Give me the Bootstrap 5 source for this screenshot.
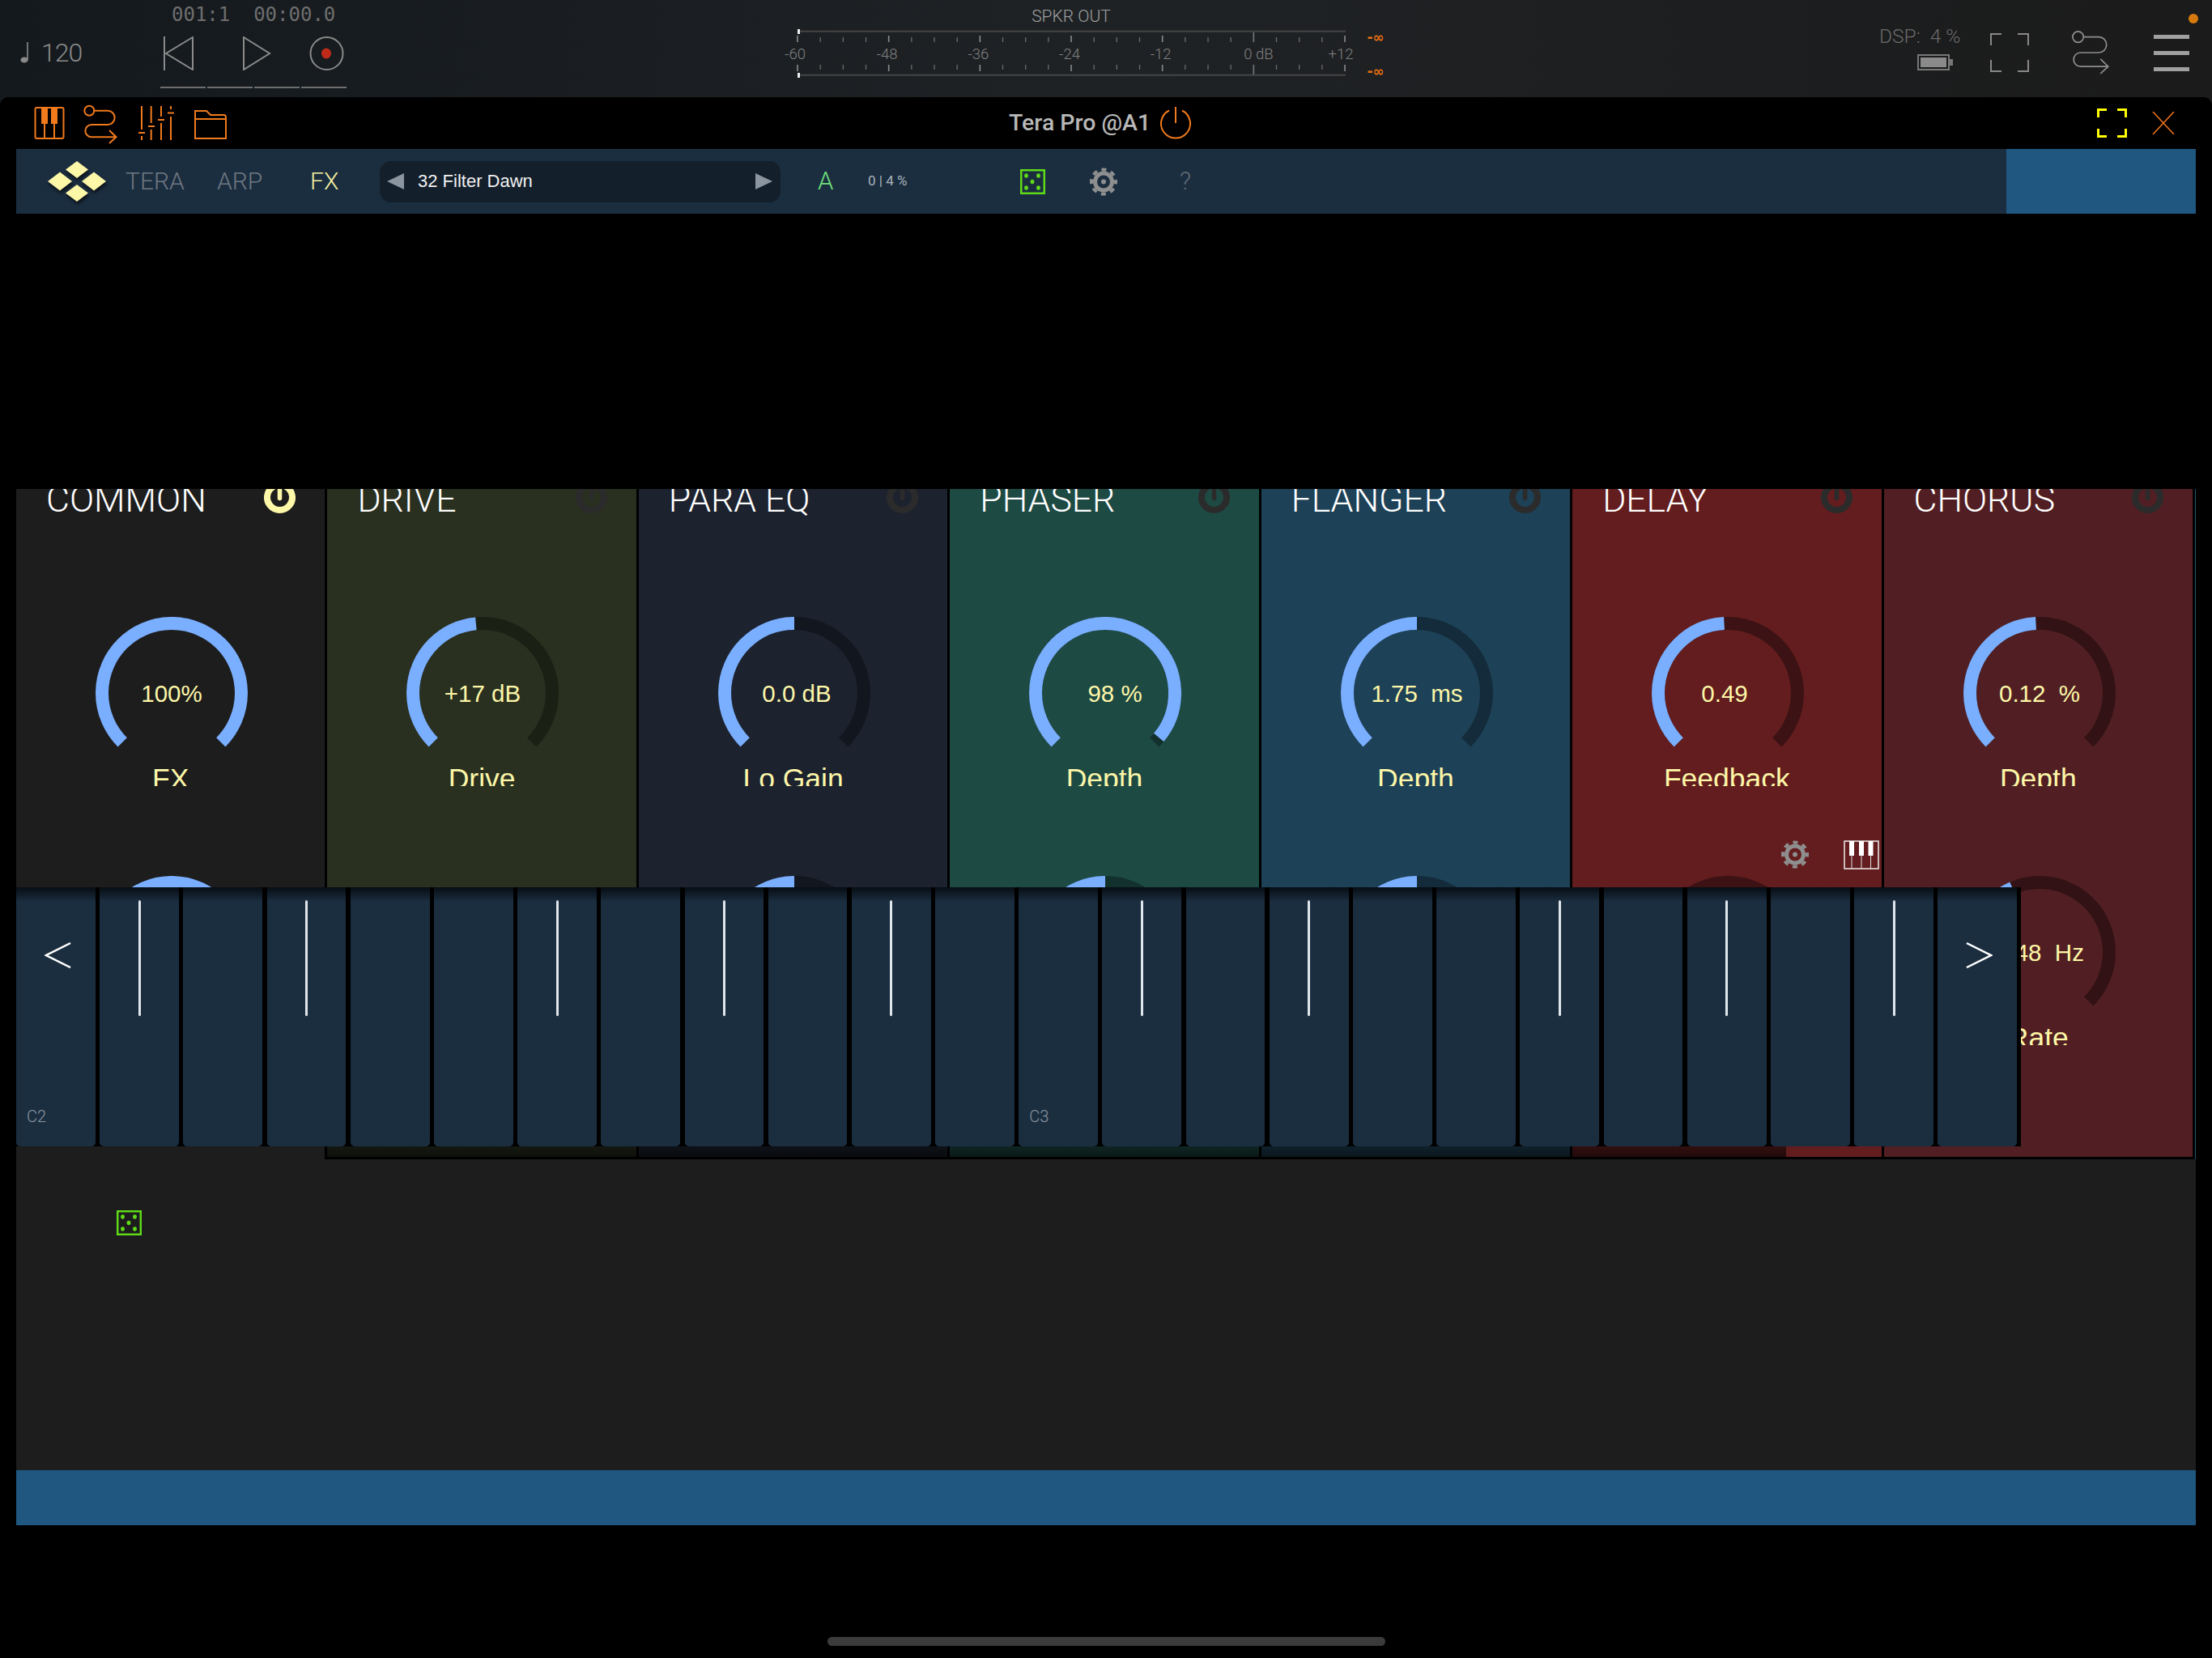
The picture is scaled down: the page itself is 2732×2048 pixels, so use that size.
<!DOCTYPE html>
<html lang="en">
<head>
    <meta charset="UTF-8">
    <title>Tera Pro @A1</title>
    <link href="https://cdn.jsdelivr.net/npm/bootstrap@5.3.0/dist/css/bootstrap.min.css" rel="stylesheet">
    <style>
        body { margin: 0; width: 2732px; height: 2048px; overflow: hidden; background: #000; font-family: Roboto, "Liberation Sans", sans-serif; font-weight: 300; }
        svg { display: block; flex: none; }
        .preText { white-space: pre; }

        /* host top bar */
        .hostBar { height: 128px; background: linear-gradient(90deg, #14191d, #1f2225 50%, #1b1b1b); position: relative; }
        .tempoBox { width: 198px; padding: 52px 0 0 25px; color: #8a8a8a; font-size: 32px; letter-spacing: -1px; line-height: 26px; gap: 14px; }
        .transportBox { width: 230px; }
        .timeText { font-family: "DejaVu Sans Mono", monospace; font-weight: 400; font-size: 24px; line-height: 28px; letter-spacing: 0; color: #6e6e6e; padding: 4px 0 0 14px; height: 45px; }
        .transportIcons { height: 42px; fill: none; stroke: #8a8a8a; stroke-width: 2; }
        .transportLine { gap: 2px; margin-top: 20px; }
        .transportLine span { flex: 1; height: 2px; background: #6e6e6e; }
        .meterBox { margin-left: 532px; width: 760px; }
        .meterBox text { font-family: Roboto, sans-serif; font-weight: 300; }
        .meterBox .meterInf { font-family: "DejaVu Sans", sans-serif; font-weight: 700; font-size: 17px; fill: #e86f10; }
        .dspBox { margin-left: 601px; width: 103px; padding-top: 31px; color: #6a6a6a; font-size: 24.5px; line-height: 28px; }
        .batteryIcon { margin: 8px 0 0 47px; }
        .screenIcon { margin: 41px 0 0 34px; fill: none; stroke: #888; stroke-width: 2; }
        .hostRoute { margin: 37px 0 0 50px; color: #8f8f8f; }
        .burgerBox { margin: 43px 0 0 51px; width: 44px; gap: 15.5px; }
        .burgerBox span { height: 4.5px; background: #a0a0a0; }
        .hostDot { position: absolute; left: 2703px; top: 17px; width: 12px; height: 12px; border-radius: 50%; background: #d67a0e; }

        /* plugin window */
        .pluginWin { margin-top: -8px; background: #000; border-radius: 10px 10px 0 0; position: relative; }
        .pluginTools { height: 64px; }
        .toolIcons { margin: 5px 0 0 30px; width: 260px; color: #f07a1c; fill: none; stroke: currentColor; stroke-width: 2; }
        .pluginTitle { margin: 0 0 0 956px; width: 174px; font-weight: 500; font-size: 28.5px; line-height: 64px; color: #b8b8b8; white-space: nowrap; }
        .pluginPower { margin: 12px 0 0 13px; fill: none; stroke: #f07a1c; stroke-width: 2; }
        .pluginExpand { margin: 14px 0 0 auto; fill: none; stroke: #ff0; stroke-width: 3; }
        .pluginClose { margin: 18px 46px 0 31px; fill: none; stroke: #e8701a; stroke-width: 1.6; }

        .headBar { margin: 0 20px; height: 80px; background: #1b2e40; }
        .logoIcon { margin-left: 39px; margin-right: 24px; filter: drop-shadow(1px 3px 2px rgba(0,0,0,.7)); }
        .tabText { font-size: 30px; line-height: 80px; color: #6f7780; }
        .tabTera { width: 113px; }
        .tabArp { width: 115px; }
        .tabFx { width: 86px; color: #f3f0a0; }
        .presetBox { width: 495px; height: 51px; background: #131f2b; border-radius: 14px; padding: 0 10px 0 9px; color: #f2f2f2; font-family: "Liberation Sans", sans-serif; font-weight: 400; font-size: 22px; }
        .presetName { margin: -2px 0 0 17px; }
        .abBtn { margin-left: 46px; width: 62px; font-size: 31px; line-height: 80px; color: #6fe07a; }
        .cpuText { width: 188px; font-size: 17px; color: #aab2ba; font-weight: 400; }
        .diceIcon { fill: none; stroke: #5fdc18; stroke-width: 2.5; }
        .headGear { margin-left: 55px; }
        .helpText { margin-left: 77px; font-size: 31px; color: #5f6a74; }
        .headSlot { margin-left: auto; width: 234px; height: 80px; background: #1f5780; }

        /* fx strip */
        .editorArea { margin: 340px 20px 0; height: 1212px; background: #1d1d1d; position: relative; }
        .fxStrip { height: 828px; width: 2692px; display: grid; grid-template-columns: repeat(7, 1fr); overflow: hidden; border-right: 1px solid #24566f; }
        .fxPanel { border-right: 3px solid #000; border-bottom: 3px solid #000; position: relative; overflow: hidden; }
        .fxCommon { background: #1d1d1d; border-bottom: 0; }
        .fxDrive { background: #293020; }
        .fxPara { background: #1c222e; }
        .fxPhaser { background: #1e4a44; }
        .fxFlanger { background: #1d4156; }
        .fxDelay { background: #631d1e; }
        .fxChorus { background: #511f23; }
        .fxDrive .knobRest { stroke: #1b2014; }
        .fxPara .knobRest { stroke: #12161f; }
        .fxPhaser .knobRest { stroke: #12312d; }
        .fxFlanger .knobRest { stroke: #132b3a; }
        .fxDelay .knobRest { stroke: #3c1214; }
        .fxChorus .knobRest { stroke: #321214; }
        .fxHead { height: 44px; margin-top: -14px; padding: 0 36px 0 37px; }
        .fxName { margin-top: 5px; font-size: 44.5px; line-height: 44px; color: #fff; font-weight: 300; }
        .fxToggle { fill: none; stroke: #2b2b2b; stroke-width: 8; }
        .fxToggleOn { stroke: #fdf7a8; }
        .fxKnob { height: 320px; }
        .fxHead + .fxKnob { margin-top: 128px; }
        .knobDial { margin-left: 98px; fill: none; stroke-width: 16; }
        .knobRest { stroke: #1d1d1d; }
        .knobFill { stroke: #7aaeff; }
        .knobDial text { font-family: "Liberation Sans", sans-serif; font-weight: 400; font-size: 29.5px; fill: #fdf7a8; stroke: none; white-space: pre; }
        .knobName { height: 26px; overflow: hidden; text-align: center; font-family: "Liberation Sans", sans-serif; font-weight: 400; font-size: 35.5px; line-height: 35px; color: #fdf7a8; }
        .delayGear { position: absolute; left: 258px; top: 434px; }
        .delayKeys { position: absolute; left: 335px; top: 434px; }

        /* keyboard overlay */
        .keyBed { position: absolute; left: 0; top: 492px; width: 2476px; height: 320px; background: #000; padding-right: 5px; gap: 5.4px; }
        .pianoKey { flex: 1; background: linear-gradient(#070d13, #1b2e40 18px); border-radius: 0 0 5px 5px; padding-top: 16px; }
        .keyMark { width: 3px; height: 143px; margin: 0 auto; background: #dfe6ec; border-radius: 2px; }
        .keyName { margin-top: auto; padding: 0 0 25px 13px; font-size: 20px; line-height: 24px; color: #8a95a0; }
        .keyArrow { position: absolute; top: 68px; fill: none; stroke: #fff; stroke-width: 2.5; }
        .keyArrowLeft { left: 35px; }
        .keyArrowRight { left: 2408px; }
        .keyShade { position: absolute; left: 382px; top: 812px; width: 1804px; height: 13px; background: linear-gradient(rgba(0,0,0,.5), rgba(0,0,0,.65)); }
        .lowerDice { margin: 63px 0 0 124px; }
        .footBar { margin: 0 20px; height: 68px; background: #1f5780; }
        .homeBar { margin: 138px 0 0 1022px; width: 689px; height: 11px; border-radius: 6px; background: #3b3b3b; }
    </style>
</head>
<body>
    <!-- shared icons -->
    <svg width="0" height="0" class="position-absolute">
        <symbol id="routeIcon" viewBox="73 4 43 50">
            <g fill="none" stroke="currentColor">
                <circle cx="80.3" cy="11.7" r="6"/>
                <path d="M86.3 11.7H103A8.65 8.65 0 0 1 103 29H83A7.65 7.65 0 0 0 83 44.3H113.5M105 36L113.5 44.3L105 52"/>
            </g>
        </symbol>
        <symbol id="gearIcon" viewBox="0 0 34 35">
            <circle cx="17" cy="17.5" r="10.5" fill="none" stroke="#8f8f8f" stroke-width="5"/>
            <circle cx="17" cy="17.5" r="15" fill="none" stroke="#8f8f8f" stroke-width="4" stroke-dasharray="6 5.78" stroke-dashoffset="3"/>
            <circle cx="17" cy="17.5" r="3" fill="#8f8f8f"/>
        </symbol>
        <symbol id="diceSymbol" viewBox="0 0 31 31">
            <rect x="1.2" y="1.2" width="28.6" height="28.6"/>
            <g fill="#5fdc18" stroke="none">
                <ellipse cx="7.5" cy="8" rx="2.4" ry="2.8"/><ellipse cx="22.5" cy="8" rx="2.4" ry="2.8"/><ellipse cx="15" cy="15.5" rx="2.4" ry="2.8"/><ellipse cx="7.5" cy="23" rx="2.4" ry="2.8"/><ellipse cx="22.5" cy="23" rx="2.4" ry="2.8"/>
            </g>
        </symbol>
    </svg>

    <!-- Host top bar -->
    <div class="hostBar d-flex align-items-start">
        <div class="tempoBox d-flex">
            <svg width="12" height="26" viewBox="0 0 12 26"><ellipse cx="5" cy="22" rx="4.6" ry="3.6" fill="#8a8a8a"/><path d="M9 22V0" stroke="#8a8a8a" stroke-width="1.6"/></svg>
            <span>120</span>
        </div>
        <div class="transportBox">
            <div class="timeText preText">001:1  00:00.0</div>
            <svg class="transportIcons" width="230" height="42" viewBox="198 45 230 42">
                <path d="M203 45V87M238 46L205 66L238 86Z"/>
                <path d="M301 46L333 66L301 86Z"/>
                <circle cx="403.5" cy="66" r="20"/>
                <ellipse cx="403" cy="66" rx="6" ry="6.5" fill="#c02a18" stroke="none"/>
            </svg>
            <div class="transportLine d-flex"><span></span><span></span><span></span><span></span></div>
        </div>
        <div class="meterBox">
            <svg id="meterSvg" width="760" height="120" viewBox="960 0 760 120"></svg>
        </div>
        <div class="dspBox">
            <div class="preText">DSP:  4 %</div>
            <svg class="batteryIcon" width="44" height="20" viewBox="0 0 44 20">
                <rect x="1" y="1" width="38" height="18" fill="none" stroke="#777" stroke-width="2"/>
                <rect x="4" y="4" width="32" height="12" fill="#8a8a8a"/>
                <rect x="40" y="6" width="4" height="8" fill="#777"/>
            </svg>
        </div>
        <svg class="screenIcon" width="48" height="48" viewBox="0 0 48 48">
            <path d="M1 15V1H14M34 1H47V15M1 33V47H14M34 47H47V33"/>
        </svg>
        <svg class="hostRoute" width="53" height="56" stroke-width="1.5"><use href="#routeIcon"/></svg>
        <div class="burgerBox d-flex flex-column"><span></span><span></span><span></span></div>
        <div class="hostDot"></div>
    </div>

    <!-- Plugin window -->
    <div class="pluginWin">
        <div class="pluginTools d-flex align-items-start">
            <div class="toolIcons d-flex">
                <svg width="70" height="56" viewBox="0 0 70 56">
                    <rect x="13.5" y="8" width="35" height="38" rx="2"/>
                    <path d="M25 8V46M37 8V46"/>
                    <rect x="22" y="8" width="6" height="19" fill="currentColor"/>
                    <rect x="34" y="8" width="6" height="19" fill="currentColor"/>
                </svg>
                <svg width="68" height="56" viewBox="70 0 68 56">
                    <circle cx="80.3" cy="11.7" r="6"/>
                    <path d="M86.3 11.7H103A8.65 8.65 0 0 1 103 29H83A7.65 7.65 0 0 0 83 44.3H113.5M105 36L113.5 44.3L105 52"/>
                </svg>
                <svg width="66" height="56" viewBox="138 0 66 56">
                    <path d="M145 6V35M141 39H149M145 43V48M156.7 6V27M153 31H161M156.7 35V48M169 6V19M165 23H173M169 27V48M181 6V10M177 14.5H185M181 19V48"/>
                </svg>
                <svg width="56" height="56" viewBox="204 0 56 56">
                    <path d="M211 46V12H225L230 17H246Q249 17 249 20V46ZM211 22H249"/>
                </svg>
            </div>
            <div class="pluginTitle">Tera Pro @A1</div>
            <svg class="pluginPower" width="38" height="40" viewBox="0 0 38 40">
                <path d="M19 0V20M11 4.5A18 18 0 1 0 27 4.5"/>
            </svg>
            <svg class="pluginExpand" width="37" height="36" viewBox="0 0 37 36">
                <path d="M1.5 11V1.5H12M25 1.5H35.5V11M1.5 25V34.5H12M25 34.5H35.5V25"/>
            </svg>
            <svg class="pluginClose" width="28" height="28" viewBox="0 0 28 28"><path d="M1 0L27 28M27 0L1 28"/></svg>
        </div>

        <div class="headBar d-flex align-items-center">
            <svg class="logoIcon" width="72" height="50" viewBox="0 0 72 50" fill="#fdf7a8">
                <path d="M36 0L50 10.5L36 21L22 10.5Z"/>
                <path d="M36 29L50 39.5L36 50L22 39.5Z"/>
                <path d="M15 13.5L30 25L15 36.5L0 25Z"/>
                <path d="M57 13.5L72 25L57 36.5L42 25Z"/>
            </svg>
            <span class="tabText tabTera">TERA</span>
            <span class="tabText tabArp">ARP</span>
            <span class="tabText tabFx">FX</span>
            <div class="presetBox d-flex align-items-center">
                <svg width="21" height="20" viewBox="0 0 21 20"><path d="M21 0V20L0 10Z" fill="#8a95a0"/></svg>
                <span class="presetName flex-grow-1">32 Filter Dawn</span>
                <svg width="21" height="20" viewBox="0 0 21 20"><path d="M0 0V20L21 10Z" fill="#8a95a0"/></svg>
            </div>
            <span class="abBtn">A</span>
            <span class="cpuText">0 | 4 %</span>
            <svg class="diceIcon" width="31" height="31"><use href="#diceSymbol"/></svg>
            <svg class="headGear" width="34" height="35"><use href="#gearIcon"/></svg>
            <span class="helpText">?</span>
            <div class="headSlot"></div>
        </div>

        <div class="editorArea">
            <div class="fxStrip" id="fxStrip"></div>
            <div class="keyShade"></div>
            <div class="keyBed d-flex" id="keyBed"></div>
            <svg class="lowerDice diceIcon" width="31" height="31"><use href="#diceSymbol"/></svg>
        </div>
        <div class="footBar"></div>
        <div class="homeBar"></div>
    </div>

    <script src="https://cdn.jsdelivr.net/npm/bootstrap@5.3.0/dist/js/bootstrap.bundle.min.js"></script>
    <script>
        // fx panels, amount is the filled part of the 270 degree arc
        const panels = [
            { cls: "fxCommon", name: "COMMON", on: true, knobs: [
                { value: "100%", label: "FX", amount: 1 }, { amount: 1 }] },
            { cls: "fxDrive", name: "DRIVE", knobs: [
                { value: "+17 dB", label: "Drive", amount: 0.48 }] },
            { cls: "fxPara", name: "PARA EQ", knobs: [
                { value: "0.0 dB", label: "Lo Gain", amount: 0.5, dx: 3 }, { amount: 0.5 }] },
            { cls: "fxPhaser", name: "PHASER", knobs: [
                { value: "98 %", label: "Depth", amount: 0.98, dx: 12 }, { amount: 0.5 }] },
            { cls: "fxFlanger", name: "FLANGER", knobs: [
                { value: "1.75  ms", label: "Depth", amount: 0.5 }, { amount: 0.5 }] },
            { cls: "fxDelay", name: "DELAY", extras: true, knobs: [
                { value: "0.49", label: "Feedback", amount: 0.489, dx: -4 }, { amount: 0.2 }] },
            { cls: "fxChorus", name: "CHORUS", knobs: [
                { value: "0.12  %", label: "Depth", amount: 0.489 }, { value: "0.48  Hz", label: "Rate", amount: 0.415 }] }
        ];

        function knobHtml(k) {
            const arc = "M33.2 154.8A86 86 0 1 1 154.8 154.8";
            return `
                <div class="fxKnob">
                    <svg class="knobDial" width="188" height="183" viewBox="0 0 188 183">
                        <path class="knobRest" d="${arc}"/>
                        <path class="knobFill" d="${arc}" pathLength="270" stroke-dasharray="${k.amount * 270} 1000"/>
                        ${k.value ? `<text x="${94 + (k.dx || 0)}" y="105" text-anchor="middle">${k.value}</text>` : ""}
                    </svg>
                    ${k.label ? `<div class="knobName">${k.label}</div>` : ""}
                </div>`;
        }

        document.getElementById("fxStrip").innerHTML = panels.map(p => `
            <div class="fxPanel ${p.cls}">
                <div class="fxHead d-flex justify-content-between">
                    <span class="fxName">${p.name}</span>
                    <svg class="fxToggle ${p.on ? "fxToggleOn" : ""}" width="39" height="44" viewBox="0 0 39 44">
                        <path d="M12.2 10.8A15.5 15.5 0 1 0 26.8 10.8"/>
                        <path d="M19.5 5V25.5" stroke-width="5.5" stroke-linecap="round"/>
                    </svg>
                </div>
                ${p.knobs.map(knobHtml).join("")}
                ${p.extras ? `
                <svg class="delayGear" width="34" height="35"><use href="#gearIcon"/></svg>
                <svg class="delayKeys" width="44" height="36" viewBox="0 0 44 36" fill="#fff">
                    <rect x="1" y="1" width="42" height="34" fill="none" stroke="#eee" stroke-width="1.5"/>
                    <rect x="7" y="1" width="6" height="18"/><rect x="19" y="1" width="6" height="18"/><rect x="30.5" y="1" width="6" height="18"/>
                    <path d="M10 19V35M22 19V35M33.5 19V35" stroke="#ddd" stroke-width="1"/>
                </svg>` : ""}
            </div>`).join("");

        // 24 keys, the white marks sit on the sharps
        const marks = [1, 3, 6, 8, 10, 13, 15, 18, 20, 22];
        let keys = "";
        for (let i = 0; i < 24; i++) {
            keys += `<div class="pianoKey d-flex flex-column">
                ${marks.includes(i) ? '<div class="keyMark"></div>' : ""}
                ${i === 0 ? '<div class="keyName">C2</div>' : ""}
                ${i === 12 ? '<div class="keyName">C3</div>' : ""}
            </div>`;
        }
        keys += `<svg class="keyArrow keyArrowLeft" width="33" height="32" viewBox="0 0 33 32"><path d="M32 1L2 16L32 31"/></svg>
                 <svg class="keyArrow keyArrowRight" width="33" height="32" viewBox="0 0 33 32"><path d="M1 1L31 16L1 31"/></svg>`;
        document.getElementById("keyBed").innerHTML = keys;

        // output meter
        const labels = ["-60", "-48", "-36", "-24", "-12", "0 dB", "+12"];
        let meter = `<text x="1323" y="27" text-anchor="middle" font-size="21" fill="#a0a0a0">SPKR OUT</text>
            <path d="M986 38.7H1662M986 92.7H1662" stroke="#444" stroke-width="2"/>
            <path d="M986.5 36V42M986.5 90V96" stroke="#eee" stroke-width="3"/>`;
        for (let i = 0; i < 7; i++) {
            const x = 985 + 112.67 * i;
            const top = i === 5 ? 40 : 44;
            const low = i === 5 ? 92 : 88;
            meter += `<path d="M${x} ${top}V52M${x} 80V${low}" stroke="${i === 5 ? "#777" : "#8a8a8a"}" stroke-width="1.6"/>`;
            const tx = i === 0 ? x - 3 : i === 6 ? x - 5 : i === 5 ? x + 6 : x - 2;
            meter += `<text x="${tx}" y="73" text-anchor="middle" font-size="18.5" fill="#808080">${labels[i]}</text>`;
            if (i < 6) {
                for (let j = 1; j < 4; j++) {
                    const mx = x + 28.17 * j;
                    meter += `<path d="M${mx} 46V52M${mx} 80V86" stroke="#6a6a6a" stroke-width="1.3"/>`;
                }
            }
        }
        meter += `<text class="meterInf" x="1699" y="52" text-anchor="middle">-∞</text>
                  <text class="meterInf" x="1699" y="94" text-anchor="middle">-∞</text>`;
        document.getElementById("meterSvg").innerHTML = meter;
    </script>
</body>
</html>
